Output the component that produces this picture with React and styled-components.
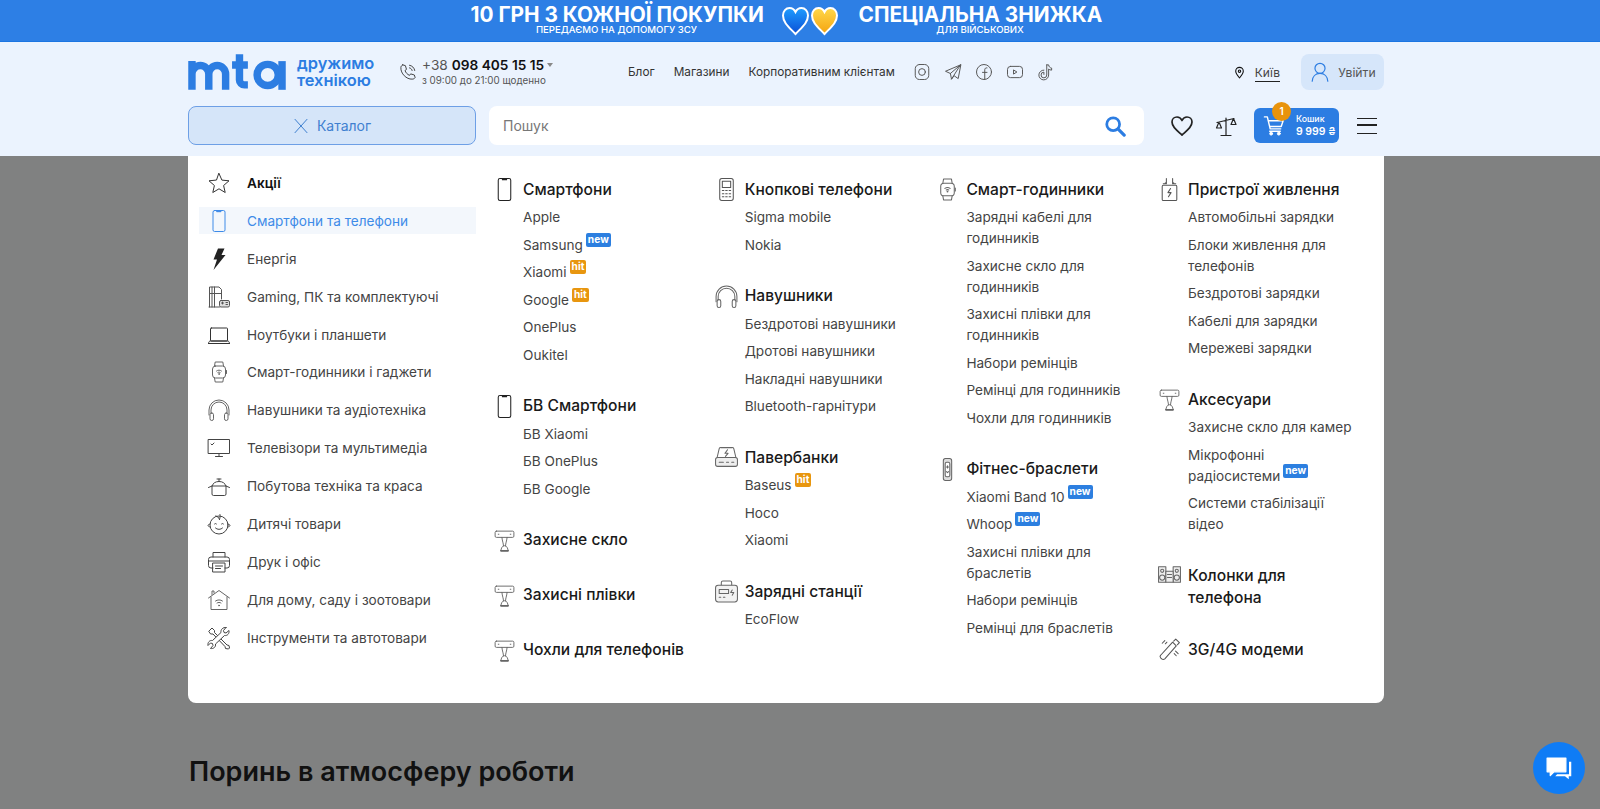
import React from 'react';
import styled, { createGlobalStyle } from 'styled-components';

const BLUE = '#2c7de2';
const FONT = 'Inter, "Noto Sans", sans-serif';

const GlobalStyle = createGlobalStyle`
  html, body { margin: 0; padding: 0; height: 100%; overflow: hidden; }
  body { font-family: ${FONT}; background: #808181; color: #111; }
  * { box-sizing: border-box; }
  ul { list-style: none; margin: 0; padding: 0; }
  a { color: inherit; text-decoration: none; }
`;

/* ---------- icons ---------- */
const Svg = styled.svg.attrs(({ $w = 24, $h, $box }) => ({
  width: $w,
  height: $h || $w,
  viewBox: $box || '0 0 24 24',
  fill: 'none',
  stroke: 'currentColor',
  strokeWidth: 1,
  strokeLinecap: 'round',
  strokeLinejoin: 'round',
}))`
  display: block;
  flex: none;
  color: ${(p) => p.$color || 'inherit'};
`;

const icons = {
  star: <path d="M12 2.500l2.900 6.600 7.100.7-5.400 4.700 1.600 7-6.200-3.700-6.200 3.700 1.600-7L2 9.800l7.100-.7z" />,
  phone: (
    <>
      <rect x="6" y="1.500" width="12" height="21" rx="1.600" />
      <path d="M10 1.800h4v.9h-4z" fill="currentColor" />
    </>
  ),
  bolt: <path d="M11 1.500h6.500l-3 6.500h4L6.500 23l3.500-10.500H6.500z" fill="#222" stroke="none" />,
  gaming: (
    <g stroke="#555">
      <path d="M2.500 22V2h9.500l2.500 2.500V14M2.500 8.500h12M5 2v20M7.500 2v20M2 22h10.500" />
      <rect x="12.500" y="15.500" width="10" height="6.500" rx="1.500" fill="#ddd" />
      <path d="M14.500 18h2M15.500 17v2M19 17.500h1.500M19 19.500h1.500" />
    </g>
  ),
  laptop: (
    <>
      <rect x="3.500" y="5" width="17" height="13" rx=".8" />
      <path d="M1.500 20.500h21M1.500 20.500c0-1.500.8-2.500 2-2.500h17c1.200 0 2 1 2 2.500M10 20.500h4" />
    </>
  ),
  watch: (
    <g stroke="#666">
      <rect x="5.500" y="6" width="13" height="12" rx="3" />
      <path d="M7.500 6l.7-4h7.600l.7 4M7.500 18l.7 4h7.600l.7-4M19.500 10.500v3" />
      <path d="M9.500 11c1.500-1.200 3.500-1.200 5 0M10.800 12.500c.8-.5 1.600-.5 2.400 0" />
      <circle cx="12" cy="14" r=".4" />
    </g>
  ),
  band: (
    <g stroke="#666">
      <rect x="8" y="1.500" width="8" height="21" rx="2" fill="#ddd" />
      <rect x="9.800" y="5" width="4.400" height="14" rx="1.500" fill="#fff" />
      <path d="M11 9.500h2M12 8.500v2M11 14l1 1 1-1" />
    </g>
  ),
  headphones: (
    <g stroke="#666">
      <path d="M2 17v-5a10 10 0 0 1 20 0v5M4 15v-3a8 8 0 0 1 16 0v3" />
      <rect x="3" y="15" width="3.500" height="7.500" rx="1.700" />
      <rect x="17.500" y="15" width="3.500" height="7.500" rx="1.700" />
    </g>
  ),
  tv: (
    <g stroke="#444">
      <rect x="1.500" y="3.500" width="21" height="14" />
      <path d="M8.500 20.500h7M12 17.500v3M4 8l1 1 2-2" />
    </g>
  ),
  pot: (
    <g stroke="#444">
      <path d="M5 12v8a1.500 1.500 0 0 0 1.500 1.500h11A1.500 1.500 0 0 0 19 20v-8M1.500 13.500L5 12h14l3.500 1.500" />
      <path d="M5 12c1-3 3.500-4.500 7-4.500s6 1.500 7 4.500M12 7.500V5M10 5h4" />
    </g>
  ),
  baby: (
    <g stroke="#444">
      <circle cx="12" cy="13" r="9" />
      <path d="M3 12c-1.500.3-2 1-2 1.500s.8 1.200 2 1.500M21 12c1.500.3 2 1 2 1.500s-.8 1.200-2 1.500" />
      <path d="M7.500 12c.5-.7 1.500-.7 2 0M14.500 12c.5-.7 1.500-.7 2 0M8.500 16c2 1.800 5 1.800 7 0M8.500 4c1.500 0 3 1 4 3.500M13 2.500c.5 1.500 0 3-.5 5" />
    </g>
  ),
  printer: (
    <g stroke="#444">
      <path d="M6 7V2.500h12V7M6 18H4a2.500 2.500 0 0 1-2.500-2.500v-6A2.500 2.500 0 0 1 4 7h16a2.500 2.500 0 0 1 2.500 2.500v6A2.500 2.500 0 0 1 20 18h-2" />
      <rect x="6" y="13" width="12" height="9" />
      <path d="M8.500 16h7M8.500 18.500h5M2 11h20" />
    </g>
  ),
  house: (
    <g stroke="#666">
      <path d="M1.500 10L12 2.500 22.500 10M4 9v12.500h16V9M5 6.500V3h2V5" />
      <path d="M8.500 13c2-1.500 5-1.500 7 0M10 15c1.200-.8 2.800-.8 4 0" />
      <circle cx="12" cy="17.500" r=".5" />
    </g>
  ),
  tools: (
    <g stroke="#444">
      <path d="M2 5l3-3 2.500 2.500v2L20 19l2 .5 .5 2.500-1 1-3-.5-.5-2L6 8H4z" />
      <path d="M19 1.500l-2.500 3 .5 2 2 .5 3-2.500c.5 3-1.500 5.500-4.500 5L8.500 18c.5 3-2 5-5 4.500l2.500-3-.5-2-2-.5-2.500 2.500c-.5-3 1.500-5.500 4.500-5L14 6.500c-.5-3 2-5.500 5-5z" fill="#fff" />
    </g>
  ),
  keypad: (
    <g stroke="#555">
      <rect x="5.500" y="1.500" width="13" height="21" rx="2" />
      <rect x="8" y="4" width="8" height="6" />
      <path d="M8 13h1.500M11.200 13h1.500M14.500 13h1.500M8 16h1.500M11.200 16h1.500M14.500 16h1.500M8 19h1.500M11.200 19h1.500M14.500 19h1.500" />
    </g>
  ),
  powerbank: (
    <g stroke="#666">
      <path d="M3 12l2-8.500A1.500 1.500 0 0 1 6.500 2.500h11A1.500 1.500 0 0 1 19 3.500l2 8.500" />
      <rect x="1.500" y="12" width="21" height="8.500" rx="2" fill="#eee" />
      <path d="M13 4.500L10.500 8H13.500L11 11M5 16.500h4M12 16.500h2M17 16.500h2" />
    </g>
  ),
  station: (
    <g stroke="#666">
      <path d="M7 6V3.500A1.500 1.500 0 0 1 8.500 2h7A1.500 1.500 0 0 1 17 3.500V6" />
      <rect x="1.500" y="6" width="21" height="16" rx="2.500" fill="#f2f2f2" />
      <path d="M5 10h9v4H5zM5 17.500h1.500M9 17.500h1.500M17.500 10.500L16 13h3l-1.500 2.500" />
    </g>
  ),
  charger: (
    <g stroke="#555">
      <path d="M9 6.500V1.500M15 6.500V1.500M6 6.500h2v-1M18 6.500h-2v-1" />
      <rect x="5" y="8" width="14" height="14.500" rx="1" />
      <path d="M13 11l-2.500 4h3l-2.500 4" />
    </g>
  ),
  glass: (
    <g stroke="#666" strokeWidth=".9">
      <rect x="3" y="3" width="18" height="6" rx="1.200" />
      <path d="M6 6h.6M17.500 6h.6M9.500 9c.4 4 1.500 5.500 1.500 8M14.500 9c-.4 4-1.500 5.500-1.500 8M8.500 21.800c.2-2.500 1.500-4.800 3.500-4.800s3.300 2.300 3.500 4.800z" />
      <path d="M8.500 21.800h7" strokeWidth="1.600" />
    </g>
  ),
  speakers: (
    <g stroke="#666" fill="#eee">
      <rect x="1.500" y="3.500" width="7" height="15" />
      <rect x="15.500" y="3.500" width="7" height="15" />
      <rect x="8.500" y="8" width="7" height="10.500" />
      <circle cx="5" cy="7.500" r="1.500" />
      <circle cx="5" cy="14" r="2.500" />
      <circle cx="19" cy="7.500" r="1.500" />
      <circle cx="19" cy="14" r="2.500" />
      <path d="M10 11h4M10 14h4" />
    </g>
  ),
  modem: (
    <g stroke="#555">
      <path d="M3.500 17.500L15 5l3.500 3.500L7.500 21c-1 .8-2 .8-3 0l-1-1c-.7-.8-.7-1.800 0-2.500z" />
      <path d="M16 4l2-2 3.500 3.500-2 2M17.800 13.500l2.500 2.500M16.500 16l2 2M7.500 3.500L5 6M9.500 5L8 6.500" />
    </g>
  ),
};

const Icon = ({ name, size = 24, color }) => (
  <Svg $w={size} $color={color}>
    {icons[name]}
  </Svg>
);

const Logo = () => (
  <svg width="98" height="36" viewBox="0 0 99 36" fill="none" stroke={BLUE} strokeWidth="7.500" style={{ display: 'block', flex: 'none' }}>
    <path d="M4 36V7M4 20a8.500 8.500 0 0 1 17 0V36M21 20a8.500 8.500 0 0 1 17 0V36" />
    <path d="M52 0V26a5 5 0 0 0 5 5h3.500M44.500 11h16" />
    <circle cx="80.500" cy="21" r="10.700" />
    <path d="M95 7V36" />
  </svg>
);

const Heart = ({ id, from, to }) => (
  <svg width="29" height="30" viewBox="0 0 29 30" style={{ display: 'block', flex: 'none' }}>
    <defs>
      <linearGradient id={id} x1="0" y1="0" x2="0" y2="1">
        <stop offset="0" stopColor={from} />
        <stop offset="1" stopColor={to} />
      </linearGradient>
    </defs>
    <path
      d="M14.500 28C9 22 2 17 2 9.500 2 5 5 2 8.500 2c2.600 0 4.800 1.500 6 4 1.200-2.500 3.400-4 6-4C24 2 27 5 27 9.500 27 17 20 22 14.500 28z"
      fill={`url(#${id})`}
      stroke="#fff"
      strokeWidth="2"
    />
  </svg>
);

/* ---------- banner ---------- */
const Banner = styled.div`
  height: 42px;
  background: #2d7fe5;
  border-bottom: 1px solid #1b75e2;
  display: flex;
  justify-content: center;
  align-items: center;
  color: #fff;
  padding-right: 28px;
`;
const Promo = styled.div`
  width: ${(p) => p.$w}px;
  text-align: center;
  padding-bottom: 1px;
`;
const PromoTitle = styled.div`
  font-size: 20.800px;
  font-weight: 700;
  line-height: 18px;
  white-space: nowrap;
`;
const PromoSub = styled.div`
  font-size: 9.600px;
  font-weight: 500;
  line-height: 11px;
  white-space: nowrap;
`;
const Hearts = styled.div`
  display: flex;
  margin: 0 20px 0 18px;
`;

/* ---------- header ---------- */
const Header = styled.header`
  background: #ebf3fe;
  padding: 0 28px 11px 0;
`;
const Wrap = styled.div`
  width: 1196px;
  margin: 0 auto;
`;
const TopRow = styled.div`
  height: 60px;
  display: flex;
  align-items: center;
`;
const Tagline = styled.div`
  margin: 0 0 0 11px;
  width: 86px;
  color: ${BLUE};
  font-size: 16.400px;
  font-weight: 600;
  line-height: 17px;
  white-space: nowrap;
`;
const PhoneBlock = styled.div`
  display: flex;
  align-items: center;
  margin-left: 16px;
  width: 229px;
  color: #333;
`;
const PhoneText = styled.div`
  margin-left: 5px;
`;
const PhoneNumber = styled.div`
  font-size: 13.700px;
  line-height: 17px;
  color: #555;
  white-space: nowrap;
  b { font-weight: 600; color: #111; }
  &::after {
    content: '';
    display: inline-block;
    border: 3px solid transparent;
    border-top: 4px solid #888;
    border-bottom: 0;
    margin-left: 3px;
    vertical-align: 3px;
  }
`;
const PhoneHours = styled.div`
  font-size: 9.800px;
  line-height: 14px;
  color: #555;
  white-space: nowrap;
`;
const Nav = styled.nav`
  display: flex;
  gap: 19px;
  font-size: 11.800px;
  color: #333;
  white-space: nowrap;
`;
const Socials = styled.div`
  display: flex;
  gap: 13px;
  margin-left: 18px;
  color: #555;
`;
const City = styled.a`
  margin-left: auto;
  display: flex;
  align-items: center;
  gap: 9px;
  font-size: 12px;
  color: #444;
  span {
    line-height: 17px;
    padding-top: 2px;
    border-bottom: 1px solid #222;
  }
`;
const Login = styled.a`
  margin-left: 21px;
  width: 83px;
  height: 36px;
  background: #d6e6fa;
  border-radius: 8px;
  display: flex;
  align-items: center;
  justify-content: center;
  gap: 7px;
  font-size: 12.200px;
  color: #555;
`;
const BottomRow = styled.div`
  margin-top: 4px;
  height: 39px;
  display: flex;
  align-items: center;
`;
const CatalogButton = styled.button`
  width: 288px;
  height: 39px;
  background: #d5e5f9;
  border: 1px solid #6d9fe6;
  border-radius: 8px;
  display: flex;
  align-items: center;
  justify-content: center;
  gap: 8px;
  font: 14px ${FONT};
  color: #3f80d0;
  padding: 0;
`;
const Search = styled.div`
  margin-left: 13px;
  width: 655px;
  height: 39px;
  background: #fff;
  border-radius: 8px;
  display: flex;
  align-items: center;
  justify-content: space-between;
  padding: 0 18px 0 14px;
  font-size: 14px;
  color: #777;
`;
const Tool = styled.a`
  margin-left: ${(p) => p.$ml}px;
  display: block;
  color: #222;
`;
const Cart = styled.a`
  position: relative;
  margin-left: 16px;
  width: 85px;
  height: 35px;
  background: ${BLUE};
  border-radius: 6px;
  color: #fff;
  display: flex;
  align-items: center;
  padding-left: 9px;
`;
const CartBadge = styled.span`
  position: absolute;
  left: 18px;
  top: -6px;
  width: 19px;
  height: 19px;
  border-radius: 50%;
  background: #e8930c;
  font-size: 10px;
  font-weight: 600;
  line-height: 19px;
  text-align: center;
`;
const CartText = styled.div`
  margin-left: 10px;
  font-size: 8.800px;
  line-height: 12px;
  font-weight: 500;
  white-space: nowrap;
  b { display: block; font-size: 10.500px; line-height: 14px; font-weight: 600; }
`;
const Burger = styled.a`
  margin-left: 18px;
  width: 20px;
  height: 16px;
  border-top: 1.500px solid #222;
  border-bottom: 1.500px solid #222;
  position: relative;
  &::after {
    content: '';
    position: absolute;
    left: 0;
    right: 0;
    top: 5.500px;
    height: 1.500px;
    background: #222;
  }
`;

/* ---------- catalog panel ---------- */
const Stage = styled.main`
  background: #808181;
  padding-right: 28px;
`;
const Panel = styled.div`
  width: 1196px;
  margin: 0 auto;
  background: #fff;
  border-radius: 0 0 8px 8px;
  display: flex;
`;
const SideMenu = styled.ul`
  width: 288px;
  padding: 13.500px 0 41px 11px;
  flex: none;
`;
const SideItem = styled.li`
  height: 27px;
  margin-bottom: 10.900px;
  display: flex;
  align-items: center;
  gap: 16px;
  padding-left: 8px;
  font-size: 13.600px;
  font-weight: ${(p) => (p.$bold ? 600 : 400)};
  color: ${(p) => (p.$active ? '#3e8be8' : p.$bold ? '#111' : '#444')};
  background: ${(p) => (p.$active ? '#f3f7fc' : 'transparent')};
  white-space: nowrap;
`;
const Columns = styled.div`
  display: flex;
  padding: 21px 0 0 16px;
`;
const Column = styled.div`
  width: 221.700px;
`;
const Section = styled.section`
  margin-bottom: 30px;
`;
const Heading = styled.div`
  display: flex;
  gap: 6px;
  font-size: 15.600px;
  font-weight: 500;
  line-height: 22px;
  color: #1a1a1a;
  span {
    width: 166px;
    margin: 1.500px 0 -1.500px;
  }
`;
const Links = styled.ul`
  margin: -1.500px 0 -2px 31px;
  width: 170px;
`;
const LinkItem = styled.li`
  margin-top: 6.500px;
  font-size: 13.600px;
  line-height: 21px;
  color: #444;
`;
const Tag = styled.span`
  display: inline-block;
  margin: -9px 0 -9px 3px;
  padding: 0 2px;
  height: 14px;
  vertical-align: 7px;
  border-radius: 2px;
  font-size: 10.200px;
  font-weight: 700;
  line-height: 13px;
  color: #fff;
  background: ${(p) => (p.$kind === 'hit' ? '#e8960f' : '#2c7fe0')};
`;
const Below = styled.h2`
  width: 1196px;
  margin: 53px auto 0;
  padding-left: 1px;
  font-size: 27px;
  font-weight: 600;
  line-height: 31px;
  color: #111;
`;
const Chat = styled.a`
  position: fixed;
  left: 1533px;
  top: 742px;
  width: 52px;
  height: 52px;
  border-radius: 50%;
  background: #0f7cf5;
  display: flex;
  align-items: center;
  justify-content: center;
`;

/* ---------- data ---------- */
const sideItems = [
  ['star', 'Акції'],
  ['phone', 'Смартфони та телефони'],
  ['bolt', 'Енергія'],
  ['gaming', 'Gaming, ПК та комплектуючі'],
  ['laptop', 'Ноутбуки і планшети'],
  ['watch', 'Смарт-годинники і гаджети'],
  ['headphones', 'Навушники та аудіотехніка'],
  ['tv', 'Телевізори та мультимедіа'],
  ['pot', 'Побутова техніка та краса'],
  ['baby', 'Дитячі товари'],
  ['printer', 'Друк і офіс'],
  ['house', 'Для дому, саду і зоотовари'],
  ['tools', 'Інструменти та автотовари'],
];

const columns = [
  [
    { icon: 'phone', title: 'Смартфони', links: ['Apple', ['Samsung', 'new'], ['Xiaomi', 'hit'], ['Google', 'hit'], 'OnePlus', 'Oukitel'] },
    { icon: 'phone', title: 'БВ Смартфони', links: ['БВ Xiaomi', 'БВ OnePlus', 'БВ Google'] },
    { icon: 'glass', title: 'Захисне скло' },
    { icon: 'glass', title: 'Захисні плівки' },
    { icon: 'glass', title: 'Чохли для телефонів' },
  ],
  [
    { icon: 'keypad', title: 'Кнопкові телефони', links: ['Sigma mobile', 'Nokia'] },
    { icon: 'headphones', title: 'Навушники', links: ['Бездротові навушники', 'Дротові навушники', 'Накладні навушники', 'Bluetooth-гарнітури'] },
    { icon: 'powerbank', title: 'Павербанки', links: [['Baseus', 'hit'], 'Носо', 'Xiaomi'] },
    { icon: 'station', title: 'Зарядні станції', links: ['EcoFlow'] },
  ],
  [
    { icon: 'watch', title: 'Смарт-годинники', links: ['Зарядні кабелі для годинників', 'Захисне скло для годинників', 'Захисні плівки для годинників', 'Набори ремінців', 'Ремінці для годинників', 'Чохли для годинників'] },
    { icon: 'band', title: 'Фітнес-браслети', links: [['Xiaomi Band 10', 'new'], ['Whoop', 'new'], 'Захисні плівки для браслетів', 'Набори ремінців', 'Ремінці для браслетів'] },
  ],
  [
    { icon: 'charger', title: 'Пристрої живлення', links: ['Автомобільні зарядки', 'Блоки живлення для телефонів', 'Бездротові зарядки', 'Кабелі для зарядки', 'Мережеві зарядки'] },
    { icon: 'glass', title: 'Аксесуари', links: ['Захисне скло для камер', ['Мікрофонні радіосистеми', 'new'], 'Системи стабілізації відео'] },
    { icon: 'speakers', title: 'Колонки для телефона' },
    { icon: 'modem', title: '3G/4G модеми' },
  ],
];

function CatalogLink({ link }) {
  const [text, tag] = Array.isArray(link) ? link : [link];
  return (
    <LinkItem>
      {text}
      {tag && <Tag $kind={tag}>{tag}</Tag>}
    </LinkItem>
  );
}

function Social() {
  return (
    <Socials>
      <Svg $w={18}>
        <rect x="3" y="2" width="18" height="20" rx="5.500" strokeWidth="1.300" />
        <circle cx="12" cy="12" r="4.500" strokeWidth="1.300" />
      </Svg>
      <Svg $w={18}>
        <path d="M22 2.500L2 11l6.500 3 1.500 7.500 3.500-4.500 5 3.500zM22 2.500L8.500 14M22 2.500L10 21.500" strokeWidth="1.300" />
      </Svg>
      <Svg $w={18}>
        <circle cx="12" cy="12" r="10" strokeWidth="1.300" />
        <path d="M13 22v-9.500h-3M13 12.500V9c0-1.800 1-2.700 3-2.500M13 12.500h3" strokeWidth="1.300" />
      </Svg>
      <Svg $w={18}>
        <rect x="2" y="4.500" width="20" height="15" rx="4" strokeWidth="1.300" />
        <path d="M10.500 9.500l4 2.500-4 2.500z" strokeWidth="1.300" />
      </Svg>
      <Svg $w={18}>
        <path d="M13 2.500v13.500a3.800 3.800 0 1 1-3.800-3.800v3M13 2.500h2.500c.3 2.500 1.800 4 4 4.300V9.500c-1.800 0-3.200-.6-4-1.500V16a6.500 6.500 0 1 1-6.300-6.500" strokeWidth="1.300" />
      </Svg>
    </Socials>
  );
}

export default function App() {
  return (
    <>
      <GlobalStyle />
      <Banner>
        <Promo $w={292}>
          <PromoTitle>10 ГРН З КОЖНОЇ ПОКУПКИ</PromoTitle>
          <PromoSub>ПЕРЕДАЄМО НА ДОПОМОГУ ЗСУ</PromoSub>
        </Promo>
        <Hearts>
          <Heart id="hb" from="#1f9dff" to="#0a4fd6" />
          <Heart id="hy" from="#ffd84a" to="#f5a30f" />
        </Hearts>
        <Promo $w={243}>
          <PromoTitle>СПЕЦІАЛЬНА ЗНИЖКА</PromoTitle>
          <PromoSub>ДЛЯ ВІЙСЬКОВИХ</PromoSub>
        </Promo>
      </Banner>

      <Header>
        <Wrap>
          <TopRow>
            <Logo />
            <Tagline>дружимо<br />технікою</Tagline>
            <PhoneBlock>
              <Svg $w={18}>
                <path d="M5 2.500l3.500 1 1.500 5-2 1.500c1 3 3 5 6 6.500l1.500-2 5 1.500 1 3.500c-1 1.500-2.500 2-4 2C10 22 2 14 2.500 6c0-1.500 1-2.800 2.500-3.500zM14 3c3.500.5 6.500 3.500 7 7M14 6.500c1.800.4 3.200 1.800 3.500 3.500" strokeWidth="1.200" />
              </Svg>
              <PhoneText>
                <PhoneNumber>+38 <b>098 405 15 15</b></PhoneNumber>
                <PhoneHours>з 09:00 до 21:00 щоденно</PhoneHours>
              </PhoneText>
            </PhoneBlock>
            <Nav>
              <a>Блог</a>
              <a>Магазини</a>
              <a>Корпоративним клієнтам</a>
            </Nav>
            <Social />
            <City>
              <Svg $w={13} $color="#111">
                <path d="M12 22c-4-5-7-8.500-7-12.500a7 7 0 0 1 14 0c0 4-3 7.500-7 12.500z" strokeWidth="2" />
                <circle cx="12" cy="9.500" r="2.200" strokeWidth="2" />
              </Svg>
              <span>Київ</span>
            </City>
            <Login>
              <Svg $w={22} $color={BLUE}>
                <circle cx="12" cy="8" r="5.500" strokeWidth="1.300" />
                <path d="M3.500 22c.3-5 3.500-8.500 8.500-8.500s8.200 3.500 8.500 8.500" strokeWidth="1.300" />
              </Svg>
              Увійти
            </Login>
          </TopRow>
          <BottomRow>
            <CatalogButton>
              <Svg $w={16} $color="#3f80d0">
                <path d="M3 2l18 20M21 2L3 22" strokeWidth="1.500" />
              </Svg>
              Каталог
            </CatalogButton>
            <Search>
              Пошук
              <Svg $w={22} $color={BLUE}>
                <circle cx="10" cy="10" r="7" strokeWidth="3" />
                <path d="M15.500 15.500L22 22" strokeWidth="3.500" />
              </Svg>
            </Search>
            <Tool $ml={26}>
              <Svg $w={24}>
                <path d="M12 21C7 16.500 2 13 2 8c0-3 2.300-5 5-5 2 0 3.900 1.200 5 3.500C13.100 4.200 15 3 17 3c2.700 0 5 2 5 5 0 5-5 8.500-10 13z" strokeWidth="1.700" />
              </Svg>
            </Tool>
            <Tool $ml={20}>
              <Svg $w={24}>
                <path d="M12 4v17M7 21.500h10M3 8.500l17-4M5 8l-2.500 6h5zM19.500 4.500L17 10.500h5z" strokeWidth="1.200" />
              </Svg>
            </Tool>
            <Cart>
              <Svg $w={23} $color="#fff">
                <path d="M1.500 3h3l3 12.500h11M6 7h15l-2 6H7.500" strokeWidth="1.500" />
                <path d="M7 18h11" strokeWidth="1.500" />
                <circle cx="8.500" cy="20.500" r="1.500" fill="#fff" />
                <circle cx="16.500" cy="20.500" r="1.500" fill="#fff" />
              </Svg>
              <CartBadge>1</CartBadge>
              <CartText>Кошик<b>9 999 ₴</b></CartText>
            </Cart>
            <Burger />
          </BottomRow>
        </Wrap>
      </Header>

      <Stage>
        <Panel>
          <SideMenu>
            {sideItems.map(([icon, label], i) => (
              <SideItem key={label} $bold={i === 0} $active={i === 1}>
                <Icon name={icon} color={i === 1 ? '#3e8be8' : '#333'} />
                {label}
              </SideItem>
            ))}
          </SideMenu>
          <Columns>
            {columns.map((col, i) => (
              <Column key={i}>
                {col.map((s) => (
                  <Section key={s.title}>
                    <Heading>
                      <Icon name={s.icon} size={25} color="#222" />
                      <span>{s.title}</span>
                    </Heading>
                    {s.links && (
                      <Links>
                        {s.links.map((l) => (
                          <CatalogLink key={Array.isArray(l) ? l[0] : l} link={l} />
                        ))}
                      </Links>
                    )}
                  </Section>
                ))}
              </Column>
            ))}
          </Columns>
        </Panel>
        <Below>Поринь в атмосферу роботи</Below>
      </Stage>

      <Chat>
        <Svg $w={30} $color="#fff">
          <path d="M2.500 4h15v11H8l-3 3v-3H2.500z" fill="#fff" stroke="#fff" />
          <path d="M20 7h1.800v11.500h-2V21l-3-2.500H9l1.500-1.500H20z" fill="#fff" stroke="none" />
        </Svg>
      </Chat>
    </>
  );
}
